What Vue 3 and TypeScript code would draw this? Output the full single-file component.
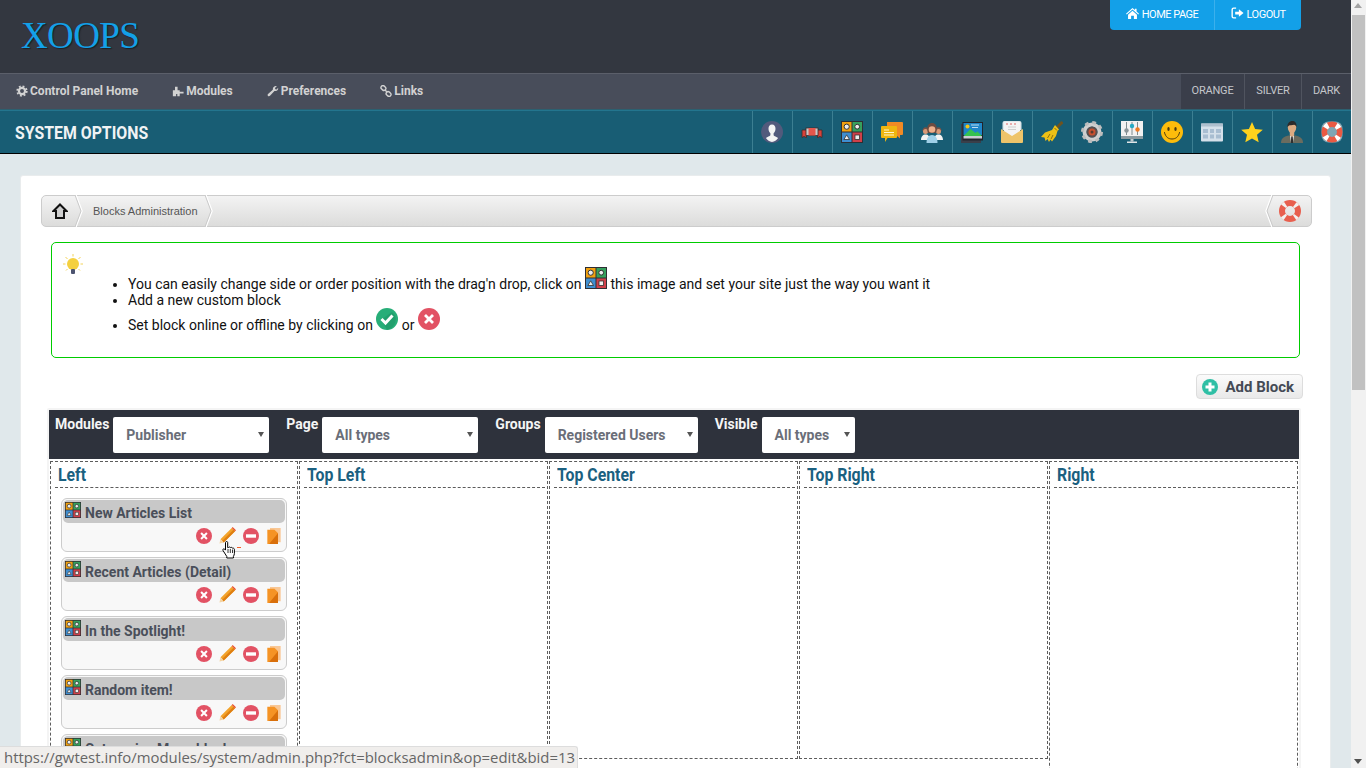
<script setup lang="ts">
// Blocks administration page of the XOOPS control panel.
const navLinks = [
  { label: "Control Panel Home", icon: "ic-gear" },
  { label: "Modules", icon: "ic-puzzle" },
  { label: "Preferences", icon: "ic-wrench" },
  { label: "Links", icon: "ic-link" },
];
const themes = ["Orange", "Silver", "Dark"];
const systemIcons = [
  "ic-user", "ic-ribbon", "ic-blocks", "ic-comments", "ic-group",
  "ic-image", "ic-mail", "ic-broom", "ic-cog", "ic-sliders",
  "ic-smile", "ic-window", "ic-star", "ic-man", "ic-buoy",
];
const filters = [
  { label: "Modules", value: "Publisher", width: "w-modules" },
  { label: "Page", value: "All types", width: "w-page" },
  { label: "Groups", value: "Registered Users", width: "w-groups" },
  { label: "Visible", value: "All types", width: "w-visible" },
];
const leftBlocks = [
  "New Articles List",
  "Recent Articles (Detail)",
  "In the Spotlight!",
  "Random item!",
  "Categories Menu block",
];
const columns = [
  { title: "Left", tall: true },
  { title: "Top Left", tall: false },
  { title: "Top Center", tall: false },
  { title: "Top Right", tall: false },
  { title: "Right", tall: true },
];
</script>

<template>
  <svg class="defs" aria-hidden="true">
    <defs>
      <symbol id="ic-gear" viewBox="0 0 14 14">
        <circle cx="7" cy="7" r="3.6" fill="none" stroke="currentColor" stroke-width="2.6" />
        <circle cx="7" cy="7" r="5.6" fill="none" stroke="currentColor" stroke-width="2" stroke-dasharray="2.2 2.2" />
      </symbol>
      <symbol id="ic-puzzle" viewBox="0 0 14 14">
        <path fill="currentColor" d="M1 6h2.500V2h3v4H9v2h4.500v1.800H9V13H6.200v-2.400H4.800V13H1z" />
      </symbol>
      <symbol id="ic-wrench" viewBox="0 0 14 14">
        <path fill="currentColor" d="M13 3.200c.4 1.800-.9 3.800-3 3.900-.5 0-.9 0-1.300-.2L3.500 12.600c-.7.8-2 .7-2.500-.1-.5-.6-.4-1.500.2-2l5.600-5c-.3-1.900 1-3.900 3.200-4.200.5-.1 1 0 1.400.1L9.300 3.500l.4 1.500 1.500.3z" />
      </symbol>
      <symbol id="ic-link" viewBox="0 0 14 14">
        <g fill="none" stroke="currentColor" stroke-width="1.600">
          <rect x="1" y="1.200" width="6" height="4.600" rx="2.300" transform="rotate(42 4 3.500)" />
          <rect x="7" y="8.200" width="6" height="4.600" rx="2.300" transform="rotate(42 10 10.500)" />
          <path d="M5.500 5.500l3 3" />
        </g>
      </symbol>
      <symbol id="ic-home" viewBox="0 0 14 14">
        <path fill="#fff" d="M7 1l2.600 2.300V2h1.800v2.900L14 7.200l-.8.9L7 2.700.8 8.100 0 7.200zM2.200 8.300L7 4.100l4.800 4.200V13H8.500V9.500h-3V13H2.200z" />
      </symbol>
      <symbol id="ic-signout" viewBox="0 0 14 14">
        <path fill="#fff" d="M5.500 2H3a1 1 0 0 0-1 1v7a1 1 0 0 0 1 1h2.500v1.500H2.800A2.300 2.300 0 0 1 .5 10.200V2.800A2.300 2.300 0 0 1 2.800.5h2.700z" />
        <path fill="#fff" d="M8.500 2.500l5 4-5 4V8H4.500V5h4z" />
      </symbol>

      <symbol id="ic-user" viewBox="0 0 22 22">
        <circle cx="11" cy="11" r="11" fill="#525a7c" />
        <path fill="#f4f4f4" d="M11 3.500c2.300 0 3.500 1.900 3.500 4.300 0 2-1 3.600-1.900 4.500v2c.6 1 3 1.500 4.500 2.800-1.500 2.300-3.600 3.800-6.100 3.800s-4.600-1.500-6.100-3.800c1.500-1.300 3.900-1.800 4.500-2.800v-2c-.9-.9-1.900-2.500-1.900-4.500 0-2.400 1.200-4.300 3.500-4.300z" />
      </symbol>
      <symbol id="ic-ribbon" viewBox="0 0 22 22">
        <path fill="#d8423a" stroke="#3a2b2b" stroke-width=".8" d="M1 9h4.500v7.500L3 15.500 1 16.500zM21 9h-4.500v7.500l2.500-1 2 1z" />
        <rect x="5" y="7" width="12" height="7.500" fill="#c9c9c9" stroke="#3a2b2b" stroke-width=".8" />
        <rect x="7.500" y="7" width="7" height="7.500" fill="#e3564c" />
      </symbol>
      <symbol id="ic-blocks" viewBox="0 0 22 22">
        <rect width="22" height="22" fill="#2e2e33" />
        <rect x="1" y="1" width="9.500" height="9.500" fill="#f0a010" />
        <rect x="11.500" y="1" width="9.500" height="9.500" fill="#36a05c" />
        <rect x="1" y="11.500" width="9.500" height="9.500" fill="#3f8ed0" />
        <rect x="11.500" y="11.500" width="9.500" height="9.500" fill="#d0404a" />
        <circle cx="5.700" cy="5.700" r="2.600" fill="#eee" stroke="#333" />
        <circle cx="16.200" cy="5.700" r="2.400" fill="#eee" stroke="#333" />
        <path d="M5.700 13.800l2.800 4.700H2.900z" fill="#eee" stroke="#333" stroke-width=".8" />
        <rect x="14" y="14" width="4.500" height="4.500" fill="#eee" stroke="#333" stroke-width=".8" />
      </symbol>
      <symbol id="ic-comments" viewBox="0 0 22 22">
        <path fill="#f08a24" d="M6 1h15a1 1 0 0 1 1 1v11a1 1 0 0 1-1 1h-2v3.500L15 14H6z" />
        <path fill="#efb60f" d="M1 5h14a1 1 0 0 1 1 1v10a1 1 0 0 1-1 1H6.500L4 21v-4H1a1 1 0 0 1-1-1V6a1 1 0 0 1 1-1z" />
        <path stroke="#fff5cc" stroke-width="1.100" d="M3 9h5M3 11.500h10M3 14h10" />
      </symbol>
      <symbol id="ic-group" viewBox="0 0 22 22">
        <path fill="#7a5145" d="M1.500 10c0-2.500 1.300-3.800 3-3.800s3 1.300 3 3.800zM14.500 10c0-2.500 1.300-3.800 3-3.800s3 1.300 3 3.800z" />
        <circle cx="4.500" cy="10.500" r="2.500" fill="#d99a78" />
        <circle cx="17.500" cy="10.500" r="2.500" fill="#d99a78" />
        <path fill="#f2f2f2" d="M0 19c0-3.500 2-5.500 4.500-5.500S9 15.500 9 19zM13 19c0-3.500 2-5.500 4.500-5.500S22 15.500 22 19z" />
        <path fill="#6d4c41" d="M11 2c3.200 0 4.800 2.500 4.800 5.500 0 2-.4 3.500-1 4.500H7.200c-.6-1-1-2.500-1-4.500C6.200 4.500 7.800 2 11 2z" />
        <circle cx="11" cy="8.500" r="3.300" fill="#eeb08c" />
        <path fill="#9fd0e8" d="M5.500 22c0-5 2-8 5.500-8s5.500 3 5.500 8z" />
      </symbol>
      <symbol id="ic-image" viewBox="0 0 22 22">
        <rect x="0" y="3" width="20" height="19" fill="#3a3f4a" />
        <rect x="1.500" y="1" width="20.500" height="18.500" fill="#20242c" />
        <rect x="2.500" y="2" width="18.500" height="12" fill="#1f86c8" />
        <circle cx="6.500" cy="5.500" r="2" fill="#f5c518" />
        <path fill="#35c24f" d="M2.500 15l7-7 5 4 2-1.500 4.500 4.500z" />
        <rect x="2.500" y="15" width="18.500" height="2.500" fill="#c9cdd2" />
        <path stroke="#bcdcf0" d="M10 4h8M11 6.500h6" />
      </symbol>
      <symbol id="ic-mail" viewBox="0 0 22 22">
        <path fill="#dfe7ea" d="M1.500 9V2a2 2 0 0 1 2-2h15a2 2 0 0 1 2 2v7z" />
        <rect x="3" y="1" width="16" height="14" rx="1" fill="#f4f4f4" />
        <path stroke="#cfcfcf" d="M7 6h8M7 8.500h8" />
        <path stroke="#d66" stroke-width="1" d="M5 3h2M9 3h2M13 3h2" />
        <path fill="#eec46a" d="M0 8l11 7 11-7v13a1 1 0 0 1-1 1H1a1 1 0 0 1-1-1z" />
      </symbol>
      <symbol id="ic-broom" viewBox="0 0 22 22">
        <path stroke="#6d5320" stroke-width="3" d="M21.500 1l-6 6" />
        <path fill="#ecc016" d="M14 4l4 4.500-1.500 1.500-1.500 5-4 5.500-1.500-2-1.500 2.500-1.500-3-2 2-1-3.500L0 16l4-4.500L11 9z" />
        <path stroke="#8c6f0a" stroke-width="1" d="M9 13l-2.500 4M12 14l-2 4M13.500 7l2.500 2.500" />
      </symbol>
      <symbol id="ic-cog" viewBox="0 0 22 22">
        <circle cx="11" cy="11" r="7.500" fill="none" stroke="#cfcfcf" stroke-width="4" />
        <circle cx="11" cy="11" r="9.500" fill="none" stroke="#bdbdbd" stroke-width="3" stroke-dasharray="3.700 3.760" />
        <circle cx="11" cy="11" r="5.500" fill="#5a4f4f" />
        <circle cx="11" cy="11" r="3.500" fill="#c9502f" />
        <circle cx="11" cy="11" r="1.500" fill="#5a3a2f" />
      </symbol>
      <symbol id="ic-sliders" viewBox="0 0 22 22">
        <rect width="22" height="15" fill="#f1f1f1" />
        <rect y="15" width="22" height="3" fill="#8a9aa0" />
        <rect x="9.500" y="18" width="3" height="2.500" fill="#bfc8cc" />
        <rect x="6" y="20.500" width="10" height="1.500" fill="#dfe4e6" />
        <path stroke="#7d8c90" d="M5.500 1v13M11 1v13M16.500 1v13" />
        <circle cx="5.500" cy="9.500" r="2.200" fill="#8a9498" />
        <circle cx="11" cy="5" r="2.200" fill="#25a9c4" />
        <circle cx="16.500" cy="8.500" r="2.200" fill="#ef7a22" />
      </symbol>
      <symbol id="ic-smile" viewBox="0 0 22 22">
        <ellipse cx="11" cy="11" rx="11" ry="11" fill="#fdbc0b" />
        <ellipse cx="7.500" cy="8" rx="1.200" ry="2" fill="#4b3a10" />
        <ellipse cx="14.500" cy="8" rx="1.200" ry="2" fill="#4b3a10" />
        <path fill="none" stroke="#4b3a10" stroke-width="1" stroke-linecap="round" d="M3.500 11.500c1 4.800 4.200 6.500 7.500 6.500s6.500-1.700 7.500-6.500" />
      </symbol>
      <symbol id="ic-window" viewBox="0 0 22 22">
        <rect y="2.500" width="22" height="18" rx="1" fill="#d5e0ea" />
        <rect y="2.500" width="22" height="3" fill="#aebfce" />
        <g fill="#a8bdd1">
          <rect x="2" y="8" width="5" height="4" /><rect x="9" y="8" width="4" height="4" /><rect x="15" y="8" width="5" height="4" />
          <rect x="2" y="13.500" width="5" height="4" /><rect x="9" y="13.500" width="4" height="4" /><rect x="15" y="13.500" width="5" height="4" />
        </g>
      </symbol>
      <symbol id="ic-star" viewBox="0 0 22 22">
        <path fill="#ffd21c" d="M11 1l3.100 7 7.700.7-5.800 5.100 1.700 7.500L11 17.400l-6.700 3.900L6 13.800.2 8.700l7.700-.7z" />
      </symbol>
      <symbol id="ic-man" viewBox="0 0 22 22">
        <path fill="#6b6c5f" d="M0 22c0-4.500 2.500-6.500 7.500-7.500h7c5 1 7.500 3 7.500 7.500z" />
        <path fill="#f0f0f0" d="M9 14.500h4l-1 7.500h-2z" />
        <path fill="#2f2f2f" d="M10.300 15h1.400l.5 7h-2.400z" />
        <path fill="#dcab82" d="M6.700 6c0-2.800 2-4 4.300-4s4.300 1.200 4.300 4c0 3.700-2.200 6-4.300 7-2.100-1-4.300-3.300-4.300-7z" />
        <path fill="#dcab82" d="M8.800 10.500h4.400v3.800L11 16l-2.200-1.700z" />
        <path fill="#2b2b2b" d="M6.500 6.500C5.900 2.500 8.500 0 11.300 0c2.500 0 4.800 1.800 4.200 6.500-.5-1.800-1.200-2.500-2.400-2.700-1.800.4-4.700.4-5.300.9-.5.400-1.100 1-1.300 1.800z" />
      </symbol>
      <symbol id="ic-buoy" viewBox="0 0 22 22">
        <rect x=".5" y=".5" width="21" height="21" rx="7" fill="#7fa6b4" />
        <circle cx="11" cy="11" r="7.700" fill="none" stroke="#ea5a43" stroke-width="5.600" />
        <circle cx="11" cy="11" r="7.700" fill="none" stroke="#fff" stroke-width="5.600" stroke-dasharray="4 8.100" stroke-dashoffset="2" transform="rotate(45 11 11)" />
      </symbol>
      <symbol id="ic-buoy-flat" viewBox="0 0 22 22">
        <circle cx="11" cy="11" r="8" fill="none" stroke="#e8604f" stroke-width="6" />
        <circle cx="11" cy="11" r="8" fill="none" stroke="#f2f2f0" stroke-width="6" stroke-dasharray="3 9.570" stroke-dashoffset="1.500" transform="rotate(45 11 11)" />
      </symbol>

      <symbol id="ic-ok" viewBox="0 0 22 22">
        <circle cx="11" cy="11" r="11" fill="#27ae78" />
        <path fill="#1f9466" d="M5.500 11.500L16 4l3 3.500A11 11 0 0 1 11 22z" opacity=".6" />
        <path fill="none" stroke="#fff" stroke-width="3" d="M5.500 11l4 4 7-7.500" />
      </symbol>
      <symbol id="ic-off" viewBox="0 0 22 22">
        <circle cx="11" cy="11" r="11" fill="#e25264" />
        <path stroke="#fff" stroke-width="2.800" d="M7 7l8 8M15 7l-8 8" />
      </symbol>
      <symbol id="ic-minus" viewBox="0 0 16 16">
        <circle cx="8" cy="8" r="8" fill="#e25264" />
        <rect x="3" y="6.300" width="10" height="3.400" fill="#fff" />
      </symbol>
      <symbol id="ic-pencil" viewBox="0 0 18 18">
        <path fill="#f3a32b" d="M13.500 1l3.500 3.500L5 16.500 1.500 13z" />
        <path fill="#df7f12" d="M15.300 2.800L17 4.500 5 16.500 3.300 14.800z" />
        <path fill="#e94f2b" d="M13.500 1l1-1L18 3.500l-1 1z" />
        <path fill="#f4d4a4" d="M1.500 13L5 16.500.5 17.500z" />
      </symbol>
      <symbol id="ic-copy" viewBox="0 0 15 18">
        <rect x="3" y="0" width="12" height="16" fill="#f9c795" />
        <path fill="#f59324" d="M0 2h8l4 4v12H0z" />
        <path fill="#d96f0a" d="M12 6v12H2z" />
      </symbol>
      <symbol id="ic-add" viewBox="0 0 16 16">
        <circle cx="8" cy="8" r="8" fill="#2fbfa5" />
        <path fill="#fff" d="M6.500 3.500h3v3h3v3h-3v3h-3v-3h-3v-3h3z" />
      </symbol>
    </defs>
  </svg>

  <div class="page">
    <div class="main">
      <header class="top">
        <div class="logo">XOOPS</div>
        <div class="top-links">
          <a class="top-link"><svg class="top-ic"><use href="#ic-home" /></svg>Home Page</a>
          <a class="top-link"><svg class="top-ic"><use href="#ic-signout" /></svg>Logout</a>
        </div>
      </header>

      <nav class="nav">
        <div class="nav-links">
          <a v-for="link in navLinks" :key="link.label" class="nav-link">
            <svg class="nav-ic"><use :href="'#' + link.icon" /></svg>{{ link.label }}
          </a>
        </div>
        <div class="themes">
          <a v-for="theme in themes" :key="theme" class="theme">{{ theme }}</a>
        </div>
      </nav>

      <div class="options">
        <h1 class="options-title"><span>System Options</span></h1>
        <div class="option-icons">
          <a v-for="icon in systemIcons" :key="icon" class="option-cell">
            <svg class="option-ic"><use :href="'#' + icon" /></svg>
          </a>
        </div>
      </div>

      <section class="card">
        <div class="crumbs">
          <svg class="crumb-home" viewBox="0 0 16 16" width="16" height="16">
            <path fill="#cfcfcf" stroke="#111" stroke-width="2" d="M8 1.500L14.500 8H12v7H4V8H1.500z" />
          </svg>
          <svg class="crumb-sep" viewBox="0 0 8 32" width="8" height="32">
            <path fill="none" stroke="#fff" stroke-width="1.500" d="M1 0l6 16-6 16" />
            <path fill="none" stroke="#c9c9c9" d="M0 0l6 16-6 16" />
          </svg>
          <span class="crumb-text">Blocks Administration</span>
          <svg class="crumb-sep" viewBox="0 0 8 32" width="8" height="32">
            <path fill="none" stroke="#fff" stroke-width="1.500" d="M1 0l6 16-6 16" />
            <path fill="none" stroke="#c9c9c9" d="M0 0l6 16-6 16" />
          </svg>
          <span class="crumb-fill"></span>
          <svg class="crumb-sep" viewBox="0 0 8 32" width="8" height="32">
            <path fill="none" stroke="#fff" stroke-width="1.500" d="M7 0L1 16l6 16" />
            <path fill="none" stroke="#c9c9c9" d="M8 0L2 16l6 16" />
          </svg>
          <svg class="crumb-help"><use href="#ic-buoy-flat" /></svg>
        </div>

        <div class="tips">
          <svg class="bulb" viewBox="0 0 20 22" width="20" height="22">
            <g stroke="#f2d35a" stroke-width="1">
              <path d="M10 0v2.500M2.500 3l2 2M17.500 3l-2 2M0 10h2.500M20 10h-2.500M3 16.500l1.500-1.500M17 16.500L15.500 15" />
            </g>
            <circle cx="10" cy="10" r="6" fill="#f4d03f" />
            <rect x="8" y="15" width="4" height="5" rx="1" fill="#4d5470" />
          </svg>
          <ul class="tip-list">
            <li>You can easily change side or order position with the drag'n drop, click on <svg class="tip-ic"><use href="#ic-blocks" /></svg> this image and set your site just the way you want it</li>
            <li>Add a new custom block</li>
            <li>Set block online or offline by clicking on <svg class="tip-ic"><use href="#ic-ok" /></svg> or <svg class="tip-ic"><use href="#ic-off" /></svg></li>
          </ul>
        </div>

        <div class="actions">
          <a class="add-btn"><svg class="add-ic"><use href="#ic-add" /></svg>Add Block</a>
        </div>

        <div class="board">
          <div class="filters">
            <template v-for="filter in filters" :key="filter.label">
              <label class="filter-label">{{ filter.label }}</label>
              <div class="select" :class="filter.width">{{ filter.value }}</div>
            </template>
          </div>

          <div class="columns">
            <div v-for="col in columns" :key="col.title" class="column" :class="{ tall: col.tall }">
              <h3 class="col-title"><span>{{ col.title }}</span></h3>
              <template v-if="col.title === 'Left'">
                <div v-for="block in leftBlocks" :key="block" class="block">
                  <div class="block-head">
                    <svg class="block-ic"><use href="#ic-blocks" /></svg>
                    <span class="block-name">{{ block }}</span>
                  </div>
                  <div class="block-tools">
                    <svg class="tool tool-off"><use href="#ic-off" /></svg>
                    <svg class="tool tool-pencil"><use href="#ic-pencil" /></svg>
                    <svg class="tool tool-minus"><use href="#ic-minus" /></svg>
                    <svg class="tool tool-copy"><use href="#ic-copy" /></svg>
                  </div>
                </div>
              </template>
            </div>
          </div>
        </div>
      </section>
    </div>

    <div class="scrollbar">
      <span class="arrow-up"></span>
      <div class="thumb"></div>
      <span class="arrow-down"></span>
    </div>

    <!-- mouse pointer over the edit icon -->
    <svg class="pointer" viewBox="0 0 16 19" width="16" height="19">
      <path fill="#fff" stroke="#000" stroke-width="1" d="M3.500 1.500c0-1.300 2.200-1.300 2.200 0v5.200l.8-.2c.6-.8 1.800-.6 2 .2.700-.6 1.800-.3 2 .5.800-.3 1.900.2 1.900 1.200v4.100c0 1.200-.6 2-1 3v1.500H4.800v-1.500L1 9.500c-.6-1 .6-2.300 1.600-1.400l.9 1z" />
      <path stroke="#000" stroke-width=".8" d="M6 8v4M8.300 8v4M10.500 8.500V12" />
    </svg>
    <span class="pointer-dash"></span>

    <div class="status">https://gwtest.info/modules/system/admin.php?fct=blocksadmin&amp;op=edit&amp;bid=13</div>
  </div>
</template>

<style>
html, body {
  margin: 0;
  overflow: hidden;
}
</style>

<style scoped>
.defs {
  position: absolute;
  width: 0;
  height: 0;
}
.page {
  display: flex;
  position: relative;
  height: 768px;
  overflow: hidden;
  background: #e0e8eb;
  font-family: Roboto, "Liberation Sans", sans-serif;
}
.main {
  width: 1351px;
  flex: none;
}
.top {
  display: flex;
  justify-content: space-between;
  height: 73px;
  background: #333740;
}
.logo {
  padding: 14px 0 0 21px;
  font-family: "Liberation Serif", serif;
  font-size: 37px;
  line-height: 44px;
  letter-spacing: -0.6px;
  color: #13a0e8;
  text-shadow: 1px 1px 1px #1c2026;
}
.top-links {
  display: flex;
  height: 30px;
  margin-right: 50px;
  border-radius: 0 0 4px 4px;
  background: #13a0e8;
}
.top-link {
  display: flex;
  align-items: center;
  justify-content: center;
  box-sizing: border-box;
  width: 104px;
  padding-bottom: 2px;
  font-size: 11px;
  letter-spacing: -0.5px;
  text-transform: uppercase;
  color: #fff;
}
.top-link + .top-link {
  width: 87px;
  border-left: 1px solid #3cb0ec;
}
.top-ic {
  width: 13px;
  height: 13px;
  margin: -2px 3px 0 0;
}
.nav {
  display: flex;
  justify-content: space-between;
  height: 35px;
  border-top: 1px solid #5b5f6a;
  border-bottom: 1px solid #2c6070;
  background: #484d5a;
}
.nav-links {
  display: flex;
  align-items: center;
  gap: 34px;
  padding: 0 0 2px 16px;
}
.nav-link {
  display: flex;
  align-items: center;
  font-size: 12px;
  font-weight: 700;
  color: #d2d2d2;
}
.nav-ic {
  width: 12px;
  height: 12px;
  margin-right: 2px;
}
.themes {
  display: flex;
  background: #3a3e4a;
}
.theme {
  display: flex;
  align-items: center;
  justify-content: center;
  box-sizing: border-box;
  width: 63px;
  padding-bottom: 2px;
  font-size: 11px;
  letter-spacing: -0.2px;
  text-transform: uppercase;
  color: #c4c6ca;
}
.theme + .theme {
  width: 57px;
  border-left: 1px solid #50545f;
}
.theme:last-child {
  width: 50px;
}
.options {
  display: flex;
  justify-content: space-between;
  height: 42px;
  border-top: 1px solid #23758e;
  border-bottom: 1px solid #000;
  background: #185d74;
}
.options-title {
  margin: 0;
  padding-left: 15px;
  font-size: 18px;
  line-height: 44px;
  height: 42px;
  font-weight: 700;
  text-transform: uppercase;
  color: #f0f3f4;
}
.options-title span {
  display: inline-block;
  transform: scaleX(0.88);
  transform-origin: left center;
}
.option-icons {
  display: flex;
  margin-right: -1px;
}
.option-cell {
  display: flex;
  align-items: center;
  justify-content: center;
  box-sizing: border-box;
  width: 40px;
  padding-right: 2px;
  border-left: 1px solid #3c7f92;
}
.option-ic {
  width: 22px;
  height: 22px;
}
.card {
  height: 620px;
  margin: 21px 20px 0;
  padding: 19px 18px 0 20px;
  border: 1px solid #e9eced;
  border-radius: 3px;
  background: #fff;
}
.crumbs {
  display: flex;
  align-items: center;
  height: 30px;
  padding: 0 10px;
  border: 1px solid #ccc;
  border-radius: 5px;
  background: linear-gradient(#f3f3f3, #dcdcdb);
}
.crumb-home {
  margin-right: 7px;
}
.crumb-sep {
  flex: none;
}
.crumb-text {
  padding: 0 7px 0 10px;
  font-family: "Liberation Sans", sans-serif;
  font-size: 11px;
  color: #555;
}
.crumb-fill {
  flex: 1;
}
.crumb-help {
  width: 22px;
  height: 22px;
  margin-left: 6px;
}
.tips {
  height: 103px;
  margin: 15px 12px 0 10px;
  padding: 11px 0 0 11px;
  border: 1px solid #0c0;
  border-radius: 5px;
}
.bulb {
  display: block;
}
.tip-list {
  margin: -9px 0 0;
  padding-left: 65px;
  font-size: 14px;
  line-height: 16px;
  color: #111;
}
.tip-ic {
  width: 22px;
  height: 22px;
}
.actions {
  display: flex;
  justify-content: flex-end;
  margin: 16px 9px 0 0;
}
.add-btn {
  display: flex;
  align-items: center;
  height: 23px;
  padding: 0 8px 0 5px;
  border: 1px solid #ddd;
  border-radius: 4px;
  background: linear-gradient(#fbfbfb, #e9e9e9);
  font-size: 15px;
  font-weight: 700;
  color: #444a55;
}
.add-ic {
  width: 16px;
  height: 16px;
  margin-right: 7px;
}
.board {
  margin: 9px 11px 0 6px;
  padding: 2px 2px 0;
  border-radius: 2px 2px 0 0;
  background: #f4f4f4;
}
.filters {
  display: flex;
  align-items: flex-start;
  height: 49px;
  padding: 7px 0 0 6px;
  box-sizing: border-box;
  background: #2e323c;
}
.filter-label {
  margin-right: 4px;
  font-size: 14px;
  line-height: 14px;
  font-weight: 700;
  color: #f5f5f5;
}
.select {
  position: relative;
  height: 36px;
  margin-right: 17px;
  padding-left: 13px;
  box-sizing: border-box;
  border-radius: 2px;
  background: #fff;
  font-size: 14px;
  line-height: 36px;
  font-weight: 700;
  color: #6a6e78;
}
.select::after {
  content: "";
  position: absolute;
  top: 15px;
  right: 5px;
  border: 3.500px solid transparent;
  border-top: 5px solid #555;
  border-bottom: 0;
}
.w-modules {
  width: 156px;
}
.w-page {
  width: 156px;
}
.w-groups {
  width: 153px;
}
.w-visible {
  width: 93px;
}
.columns {
  display: grid;
  grid-template-columns: 248px repeat(4, 249px);
  column-gap: 1px;
  align-items: start;
  height: 320px;
  padding: 2px 0 0 1px;
  background: #fff;
}
.column {
  box-sizing: border-box;
  height: 298px;
  border: 1px dashed #5c5c5c;
}
.column.tall {
  height: 340px;
  border-bottom: 0;
}
.col-title {
  margin: 0 2px 10px 4px;
  padding-left: 3px;
  height: 25px;
  border-bottom: 1px dashed #5c5c5c;
  font-size: 18px;
  line-height: 26px;
  font-weight: 700;
  color: #1a6080;
}
.col-title span {
  display: inline-block;
  transform: scaleX(0.88);
  transform-origin: left center;
}
.block {
  box-sizing: border-box;
  width: 226px;
  height: 54px;
  margin: 0 0 5px 10px;
  padding: 1px;
  border: 1px solid #ccc;
  border-radius: 6px;
  background: #f8f8f8;
}
.block-head {
  display: flex;
  align-items: center;
  height: 23px;
  padding-left: 2px;
  border-radius: 5px;
  background: #c8c8c8;
  font-size: 14px;
  font-weight: 700;
  color: #4a4f5a;
}
.block-name {
  padding-top: 2px;
}
.block-ic {
  width: 16px;
  height: 16px;
  margin: -4px 4px 0 0;
}
.block-tools {
  display: flex;
  align-items: center;
  justify-content: flex-end;
  height: 17px;
  margin-top: 4px;
  padding-right: 4px;
}
.tool {
  width: 16px;
  height: 16px;
}
.tool-off {
  margin-right: 7px;
}
.tool-pencil {
  width: 17px;
  height: 17px;
  margin-right: 7px;
}
.tool-minus {
  margin-right: 8px;
}
.tool-copy {
  width: 14px;
}
.scrollbar {
  position: relative;
  flex: none;
  width: 15px;
  background: #f1f1f1;
}
.thumb {
  width: 13px;
  height: 375px;
  margin: 15px 0 0 1px;
  background: #c1c1c1;
}
.arrow-up,
.arrow-down {
  position: absolute;
  left: 3px;
  border: 4px solid transparent;
}
.arrow-up {
  top: 3px;
  border-top: 0;
  border-bottom: 5px solid #a3a3a3;
}
.arrow-down {
  bottom: 4px;
  border-bottom: 0;
  border-top: 5px solid #505050;
}
.pointer {
  position: absolute;
  left: 222px;
  top: 541px;
}
.pointer-dash {
  position: absolute;
  left: 237px;
  top: 547px;
  width: 4px;
  height: 1px;
  background: #f0602a;
}
.status {
  position: absolute;
  left: 0;
  bottom: 0;
  height: 21px;
  padding: 0 2px 0 4px;
  border-top: 1px solid #ddd;
  border-right: 1px solid #ddd;
  border-radius: 0 3px 0 0;
  background: #f0eeec;
  font-family: "Open Sans", sans-serif;
  font-size: 14.900px;
  line-height: 21px;
  color: #666;
  white-space: nowrap;
}
</style>
